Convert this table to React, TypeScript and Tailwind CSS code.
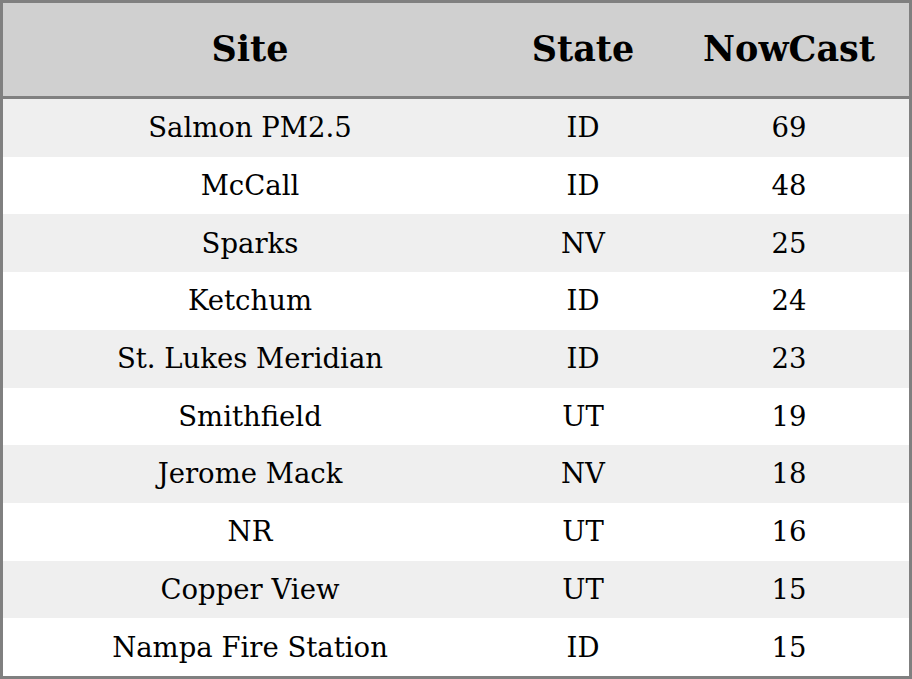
const rows: [string, string, number][] = [
  ['Salmon PM2.5', 'ID', 69],
  ['McCall', 'ID', 48],
  ['Sparks', 'NV', 25],
  ['Ketchum', 'ID', 24],
  ['St. Lukes Meridian', 'ID', 23],
  ['Smithfield', 'UT', 19],
  ['Jerome Mack', 'NV', 18],
  ['NR', 'UT', 16],
  ['Copper View', 'UT', 15],
  ['Nampa Fire Station', 'ID', 15],
];

export default function App() {
  return (
    <div className="h-screen w-full bg-white font-['DejaVu_Serif',serif] text-black">
      <div className="flex h-full flex-col border-[3px] border-[#808080]">
        <div className="grid h-[96px] shrink-0 grid-cols-[494px_172px_1fr] items-center border-b-[3px] border-[#808080] bg-[#d0d0d0] text-center text-[35px] font-bold">
          <div>Site</div>
          <div>State</div>
          <div>NowCast</div>
        </div>
        <div className="grid flex-1 grid-rows-10">
          {rows.map(([site, state, now], i) => (
            <div
              key={i}
              className={
                'grid grid-cols-[494px_172px_1fr] items-center text-center text-[27.5px] ' +
                (i % 2 === 0 ? 'bg-[#efefef]' : 'bg-white')
              }
            >
              <div>{site}</div>
              <div>{state}</div>
              <div>{now}</div>
            </div>
          ))}
        </div>
      </div>
    </div>
  );
}
